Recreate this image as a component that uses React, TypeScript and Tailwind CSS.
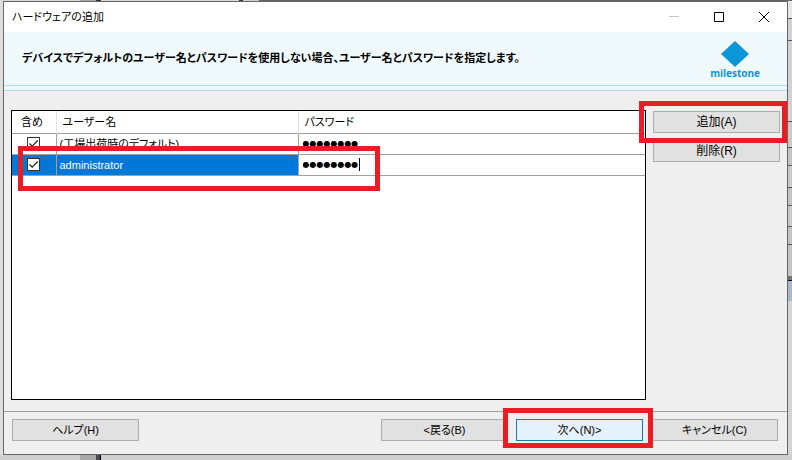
import { useState } from 'react';
import type { ReactNode } from 'react';

const rows = [
  { id: 'default', name: '(工場出荷時のデフォルト)', selected: false },
  { id: 'admin', name: 'administrator', selected: true },
];

const rightEdge = [
  { h: 17, cls: 'bg-[#e8e8e8]' },
  { h: 22, cls: 'bg-[#d2d2d2] border-t border-[#555]' },
  { h: 81, cls: 'bg-[#d2d2d2] border-t border-[#555]' },
  { h: 26, cls: 'bg-[#cacaca] border-t border-[#555]' },
  { h: 18, cls: 'bg-[#c4c4c4] border-t border-[#555]' },
  { h: 22, cls: 'bg-[#cacaca] border-t border-[#555]' },
  { h: 18, cls: 'bg-[#c4c4c4] border-t border-[#555]' },
  { h: 21, cls: 'bg-[#cacaca] border-t border-[#555]' },
  { h: 18, cls: 'bg-[#c4c4c4] border-t border-[#555]' },
  { h: 32, cls: 'bg-[#c4c4c4] border-t border-[#555]' },
  { h: 5, cls: 'bg-[#70757a] border-b border-black' },
  { h: 20, cls: 'bg-[#a9b8ca]' },
];

function Mark({ className }: { className: string }) {
  return <span className={`pointer-events-none absolute z-10 border-[5px] border-[#ea1c24] ${className}`} />;
}

function DialogButton({ children, primary }: { children: ReactNode; primary?: boolean }) {
  return (
    <button
      type="button"
      className={`block h-[22px] w-[127px] border text-center leading-[18px] ${
        primary ? 'border-[#1c78bd] bg-[#e5f1fb]' : 'border-[#adadad] bg-[#e1e1e1]'
      }`}
    >
      {children}
    </button>
  );
}

export default function App() {
  const [checked, setChecked] = useState<Record<string, boolean>>({ default: true, admin: true });

  return (
    <div className="flex min-h-screen flex-col bg-[#d4d3d4] font-['Liberation_Sans','Noto_Sans_CJK_JP',sans-serif] text-[11px] text-black [font-feature-settings:'palt']">
      <div className="flex h-px bg-[#666]">
        <div className="w-20 bg-[#d8d8d8]" />
        <div className="w-4 bg-[#a9a9a9]" />
        <div className="w-[5px] bg-[#333]" />
        <div className="w-[138px] bg-[#d8d8d8]" />
        <div className="w-1 bg-[#333]" />
        <div className="w-4 bg-[#d0d0d0]" />
      </div>
      <div className="flex flex-1">
        <div className="w-[3px] bg-[#dedede]" />
        <main className="flex flex-1 flex-col border border-[#666] bg-[#efefef]">
          <header className="flex h-[30px] items-center bg-white pl-2">
            <h1 className="flex-1">ハードウェアの追加</h1>
            <button type="button" aria-label="最小化" className="flex w-[45px] justify-center text-[#c8c8c8]">
              <svg width="10" height="10" stroke="currentColor" fill="none">
                <path d="M0 4.5h10" />
              </svg>
            </button>
            <button type="button" aria-label="最大化" className="flex w-[45px] justify-center">
              <svg width="10" height="10" stroke="currentColor" fill="none">
                <path d="M.5 .5h9v9h-9z" />
              </svg>
            </button>
            <button type="button" aria-label="閉じる" className="flex w-[46px] justify-center">
              <svg width="10" height="10" stroke="currentColor" fill="none">
                <path d="M0 0l10 10M10 0L0 10" />
              </svg>
            </button>
          </header>

          <section className="flex h-[54px] items-center justify-between border-b border-[#a8e0ee] bg-[#f0f9fc] pr-[27px] pl-[18px]">
            <p className="font-bold">
              デバイスでデフォルトのユーザー名とパスワードを使用しない場合、ユーザー名とパスワードを指定します。
            </p>
            <div className="flex flex-col items-center pt-0.5 text-[#0a97d9]">
              <svg width="28" height="26" viewBox="0 0 28 26" fill="currentColor">
                <path d="M14 0l14 13-14 13L0 13z" />
              </svg>
              <span className="font-['Open_Sans',sans-serif] text-[10px] leading-3 font-bold">milestone</span>
            </div>
          </section>
          <div className="h-[5px] border-b border-[#a8d9ea] bg-[#f2f7f9]" />

          <section className="flex flex-1 gap-[7px] pt-[19px] pr-[7px] pb-[11px] pl-[7px]">
            <div className="relative min-h-[290px] flex-1 border border-black bg-white">
              <table className="w-full table-fixed border-collapse">
                <thead>
                  <tr className="h-[22px] border-b border-[#a0a0a0] text-left">
                    <th className="w-11 border-r border-[#e2e2e2] p-0 pl-[9px] font-normal">含め</th>
                    <th className="w-[242px] border-r border-[#e2e2e2] p-0 pl-1.5 font-normal">ユーザー名</th>
                    <th className="p-0 pl-1.5 font-normal">パスワード</th>
                  </tr>
                </thead>
                <tbody>
                  {rows.map((row) => (
                    <tr key={row.id} className="h-[21px] border-b border-[#a0a0a0]">
                      <td className={`border-r border-[#a0a0a0] p-0 ${row.selected ? 'bg-[#0078d7]' : ''}`}>
                        <label className="relative mx-auto block size-[13px]">
                          <input
                            type="checkbox"
                            aria-label={row.name}
                            checked={checked[row.id]}
                            onChange={(e) => setChecked({ ...checked, [row.id]: e.target.checked })}
                            className="peer block size-[13px] appearance-none border border-[#333] bg-white"
                          />
                          <svg
                            viewBox="0 0 13 13"
                            className="pointer-events-none absolute inset-0 hidden fill-none stroke-[#222] peer-checked:block"
                          >
                            <path d="M2.5 6.5l2.7 2.7L10.8 3.5" strokeWidth="1.2" />
                          </svg>
                        </label>
                      </td>
                      <td
                        className={`border-r border-[#a0a0a0] p-0 pl-[3px] leading-5 whitespace-nowrap ${
                          row.selected ? 'bg-[#0078d7] text-white' : ''
                        }`}
                      >
                        {row.name}
                      </td>
                      <td className="p-0 pl-1">
                        <span className="flex items-center">
                          <input
                            type="text"
                            aria-label={`${row.name} パスワード`}
                            defaultValue="●●●●●●●●"
                            className="block h-5 w-14 font-['DejaVu_Sans',sans-serif] text-[8px] outline-none"
                          />
                          {row.selected && <span className="h-[13px] w-px bg-black" />}
                        </span>
                      </td>
                    </tr>
                  ))}
                </tbody>
              </table>
              <Mark className="top-[35px] left-[6px] h-[45px] w-[362px]" />
            </div>
            <div className="flex flex-col gap-[7px] pt-px text-[12px]">
              <div className="relative">
                <DialogButton>追加(A)</DialogButton>
                <Mark className="-top-[10px] -right-[7px] -bottom-[10px] -left-[14px]" />
              </div>
              <DialogButton>削除(R)</DialogButton>
            </div>
          </section>

          <footer className="flex items-center gap-2 border-t border-[#a0a0a0] pt-[7px] pr-[9px] pb-[13px] pl-2">
            <div className="flex-1">
              <DialogButton>ヘルプ(H)</DialogButton>
            </div>
            <DialogButton>&lt;戻る(B)</DialogButton>
            <div className="relative">
              <DialogButton primary>次へ(N)&gt;</DialogButton>
              <Mark className="-top-[11px] -right-[10px] -bottom-[7px] -left-[13px]" />
            </div>
            <DialogButton>キャンセル(C)</DialogButton>
          </footer>
        </main>
        <div className="w-1 bg-[#d4d4d4]">
          {rightEdge.map((band, i) => (
            <div key={i} className={band.cls} style={{ height: band.h }} />
          ))}
        </div>
      </div>
      <div className="flex h-[5px] bg-[#d0cfd0] pl-20">
        <div className="w-4 bg-[#a9a9a9]" />
        <div className="w-[5px] border-r border-black bg-[#4a4a4f]" />
      </div>
    </div>
  );
}
